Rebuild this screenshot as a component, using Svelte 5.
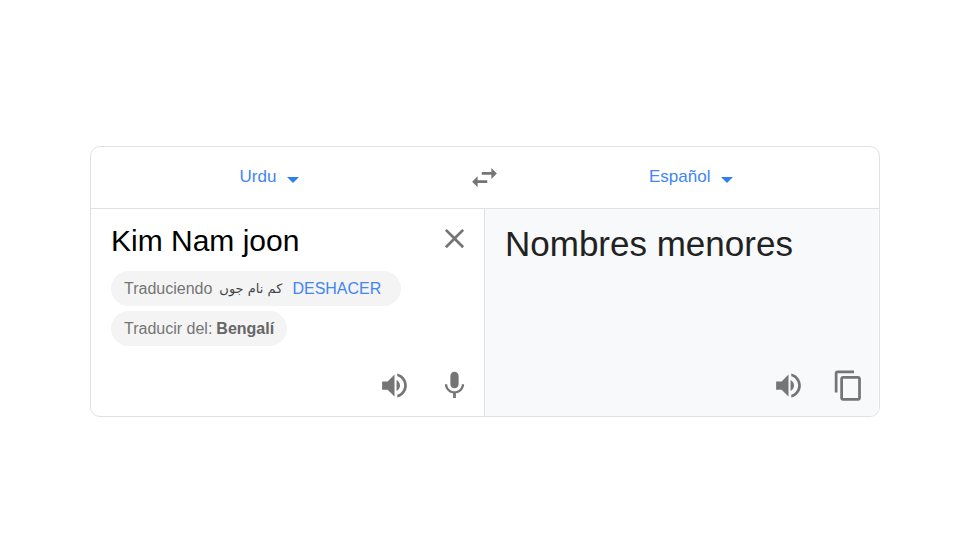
<script lang="ts">
	let source: string = 'Urdu';
	let target: string = 'Español';
	let text: string = 'Kim Nam joon';
	let suggestion: string = 'کم نام جوں';
	let detected: string = 'Bengalí';
	let translation: string = 'Nombres menores';

	const volume = 'M3 9v6h4l5 5V4L7 9H3zm10.5-1.03v8.05c1.48-.73 2.5-2.25 2.5-4.02 0-1.77-1.02-3.29-2.5-4.03zM14 3.23v2.06c2.89.86 5 3.54 5 6.71s-2.11 5.85-5 6.71v2.06c4.01-.91 7-4.49 7-8.77s-2.99-7.86-7-8.77z';
</script>

<main>
	<section class="card">
		<header>
			<div class="lang">
				<label class="picker">
					<select aria-label="Idioma de origen" bind:value={source}>
						<option value="Urdu">Urdu</option>
					</select>
					<span class="caret"></span>
				</label>
			</div>
			<button class="icon" aria-label="Intercambiar idiomas">
				<svg viewBox="0 0 24 24"><path d="M6.99 11L3 15l3.99 4v-3H14v-2H6.99v-3zM21 9l-3.99-4v3H10v2h7.01v3L21 9z"/></svg>
			</button>
			<div class="lang">
				<label class="picker">
					<select aria-label="Idioma de destino" bind:value={target}>
						<option value="Español">Español</option>
					</select>
					<span class="caret"></span>
				</label>
			</div>
		</header>

		<div class="panes">
			<div class="pane">
				<div class="entry">
					<textarea rows="1" aria-label="Texto de origen" spellcheck="false" bind:value={text}></textarea>
					<button class="icon" aria-label="Borrar" on:click={() => (text = '')}>
						<svg viewBox="0 0 24 24"><path d="M19 6.41L17.59 5 12 10.59 6.41 5 5 6.41 10.59 12 5 17.59 6.41 19 12 13.41 17.59 19 19 17.59 13.41 12z"/></svg>
					</button>
				</div>
				<div class="chips">
					<div class="chip chip--undo">
						<span>Traduciendo</span>
						<bdi lang="ur">{suggestion}</bdi>
						<button class="undo">DESHACER</button>
					</div>
					<button class="chip chip--detect">Traducir del: <b>{detected}</b></button>
				</div>
				<div class="actions">
					<button class="icon" aria-label="Escuchar">
						<svg viewBox="0 0 24 24"><path d={volume}/></svg>
					</button>
					<button class="icon" aria-label="Dictar">
						<svg viewBox="0 0 24 24"><path d="M12 14c1.66 0 2.99-1.34 2.99-3L15 5c0-1.66-1.34-3-3-3S9 3.34 9 5v6c0 1.66 1.34 3 3 3zm5.3-3c0 3-2.54 5.1-5.3 5.1S6.7 14 6.7 11H5c0 3.41 2.72 6.23 6 6.72V21h2v-3.28c3.28-.48 6-3.3 6-6.72h-1.7z"/></svg>
					</button>
				</div>
			</div>

			<div class="pane pane--result">
				<p class="translation">{translation}</p>
				<div class="actions">
					<button class="icon" aria-label="Escuchar traducción">
						<svg viewBox="0 0 24 24"><path d={volume}/></svg>
					</button>
					<button class="icon" aria-label="Copiar">
						<svg viewBox="0 0 24 24"><path d="M16 1H4c-1.1 0-2 .9-2 2v14h2V3h12V1zm3 4H8c-1.1 0-2 .9-2 2v14c0 1.1.9 2 2 2h11c1.1 0 2-.9 2-2V7c0-1.1-.9-2-2-2zm0 16H8V7h11v14z"/></svg>
					</button>
				</div>
			</div>
		</div>
	</section>
</main>

<style>
	:global(body) {
		background: #fff;
	}
	main {
		padding: 146px 74px 20px 90px;
		font-family: "Liberation Sans", Arial, sans-serif;
	}
	button, select, textarea {
		margin: 0;
		padding: 0;
		border: none;
		background: none;
		font: inherit;
		color: inherit;
	}
	button {
		cursor: pointer;
	}
	.card {
		border: 1px solid #dfe1e5;
		border-radius: 10px;
		overflow: hidden;
	}
	header {
		display: grid;
		grid-template-columns: 1fr 58px 1fr;
		align-items: center;
		justify-items: center;
		height: 60px;
		padding: 0 2px 1px 0;
		border-bottom: 1px solid #dfe1e5;
	}
	.lang {
		padding-right: 8px;
	}
	.picker {
		display: flex;
		align-items: center;
		gap: 10px;
	}
	select {
		appearance: none;
		font-size: 17px;
		line-height: 24px;
		color: #4285f4;
		cursor: pointer;
	}
	.caret {
		margin-top: 6px;
		border: 6px solid transparent;
		border-top-color: #2f80ed;
		border-bottom: none;
	}
	.icon {
		display: flex;
		flex: none;
		align-items: center;
		justify-content: center;
		width: 40px;
		height: 40px;
	}
	.icon svg {
		width: 33px;
		height: 33px;
		fill: #757575;
	}
	.panes {
		display: grid;
		grid-template-columns: 1fr 1fr;
	}
	.pane {
		display: flex;
		flex-direction: column;
		min-width: 0;
		padding: 9px 10px 11px 20px;
		border-right: 1px solid #dfe1e5;
	}
	.pane--result {
		border-right-color: #fff;
		background: #f8f9fb;
	}
	.entry {
		display: flex;
		align-items: flex-start;
	}
	textarea {
		flex: 1;
		min-width: 0;
		height: 46px;
		font-size: 30px;
		line-height: 46px;
		color: #000;
		resize: none;
		outline: none;
		overflow: hidden;
	}
	.chips {
		display: flex;
		flex-direction: column;
		align-items: flex-start;
		gap: 5px;
		margin-top: 7px;
	}
	.chip {
		display: flex;
		align-items: center;
		height: 35px;
		border-radius: 18px;
		background: #f4f4f4;
		font-size: 16px;
		color: #757575;
		white-space: nowrap;
	}
	.chip--undo {
		gap: 7px;
		padding: 0 20px 0 13px;
	}
	.chip--undo bdi {
		font-family: "DejaVu Sans", sans-serif;
		font-size: 13px;
		color: #444;
	}
	.chip--detect {
		gap: 4px;
		padding: 0 13px;
	}
	.chip b {
		color: #666;
	}
	.undo {
		margin-left: 3px;
		color: #4285f4;
	}
	.translation {
		margin: 0;
		font-size: 35px;
		line-height: 52px;
		color: #222;
	}
	.actions {
		display: flex;
		justify-content: flex-end;
		gap: 20px;
		margin-top: auto;
		padding-top: 19px;
	}
</style>
